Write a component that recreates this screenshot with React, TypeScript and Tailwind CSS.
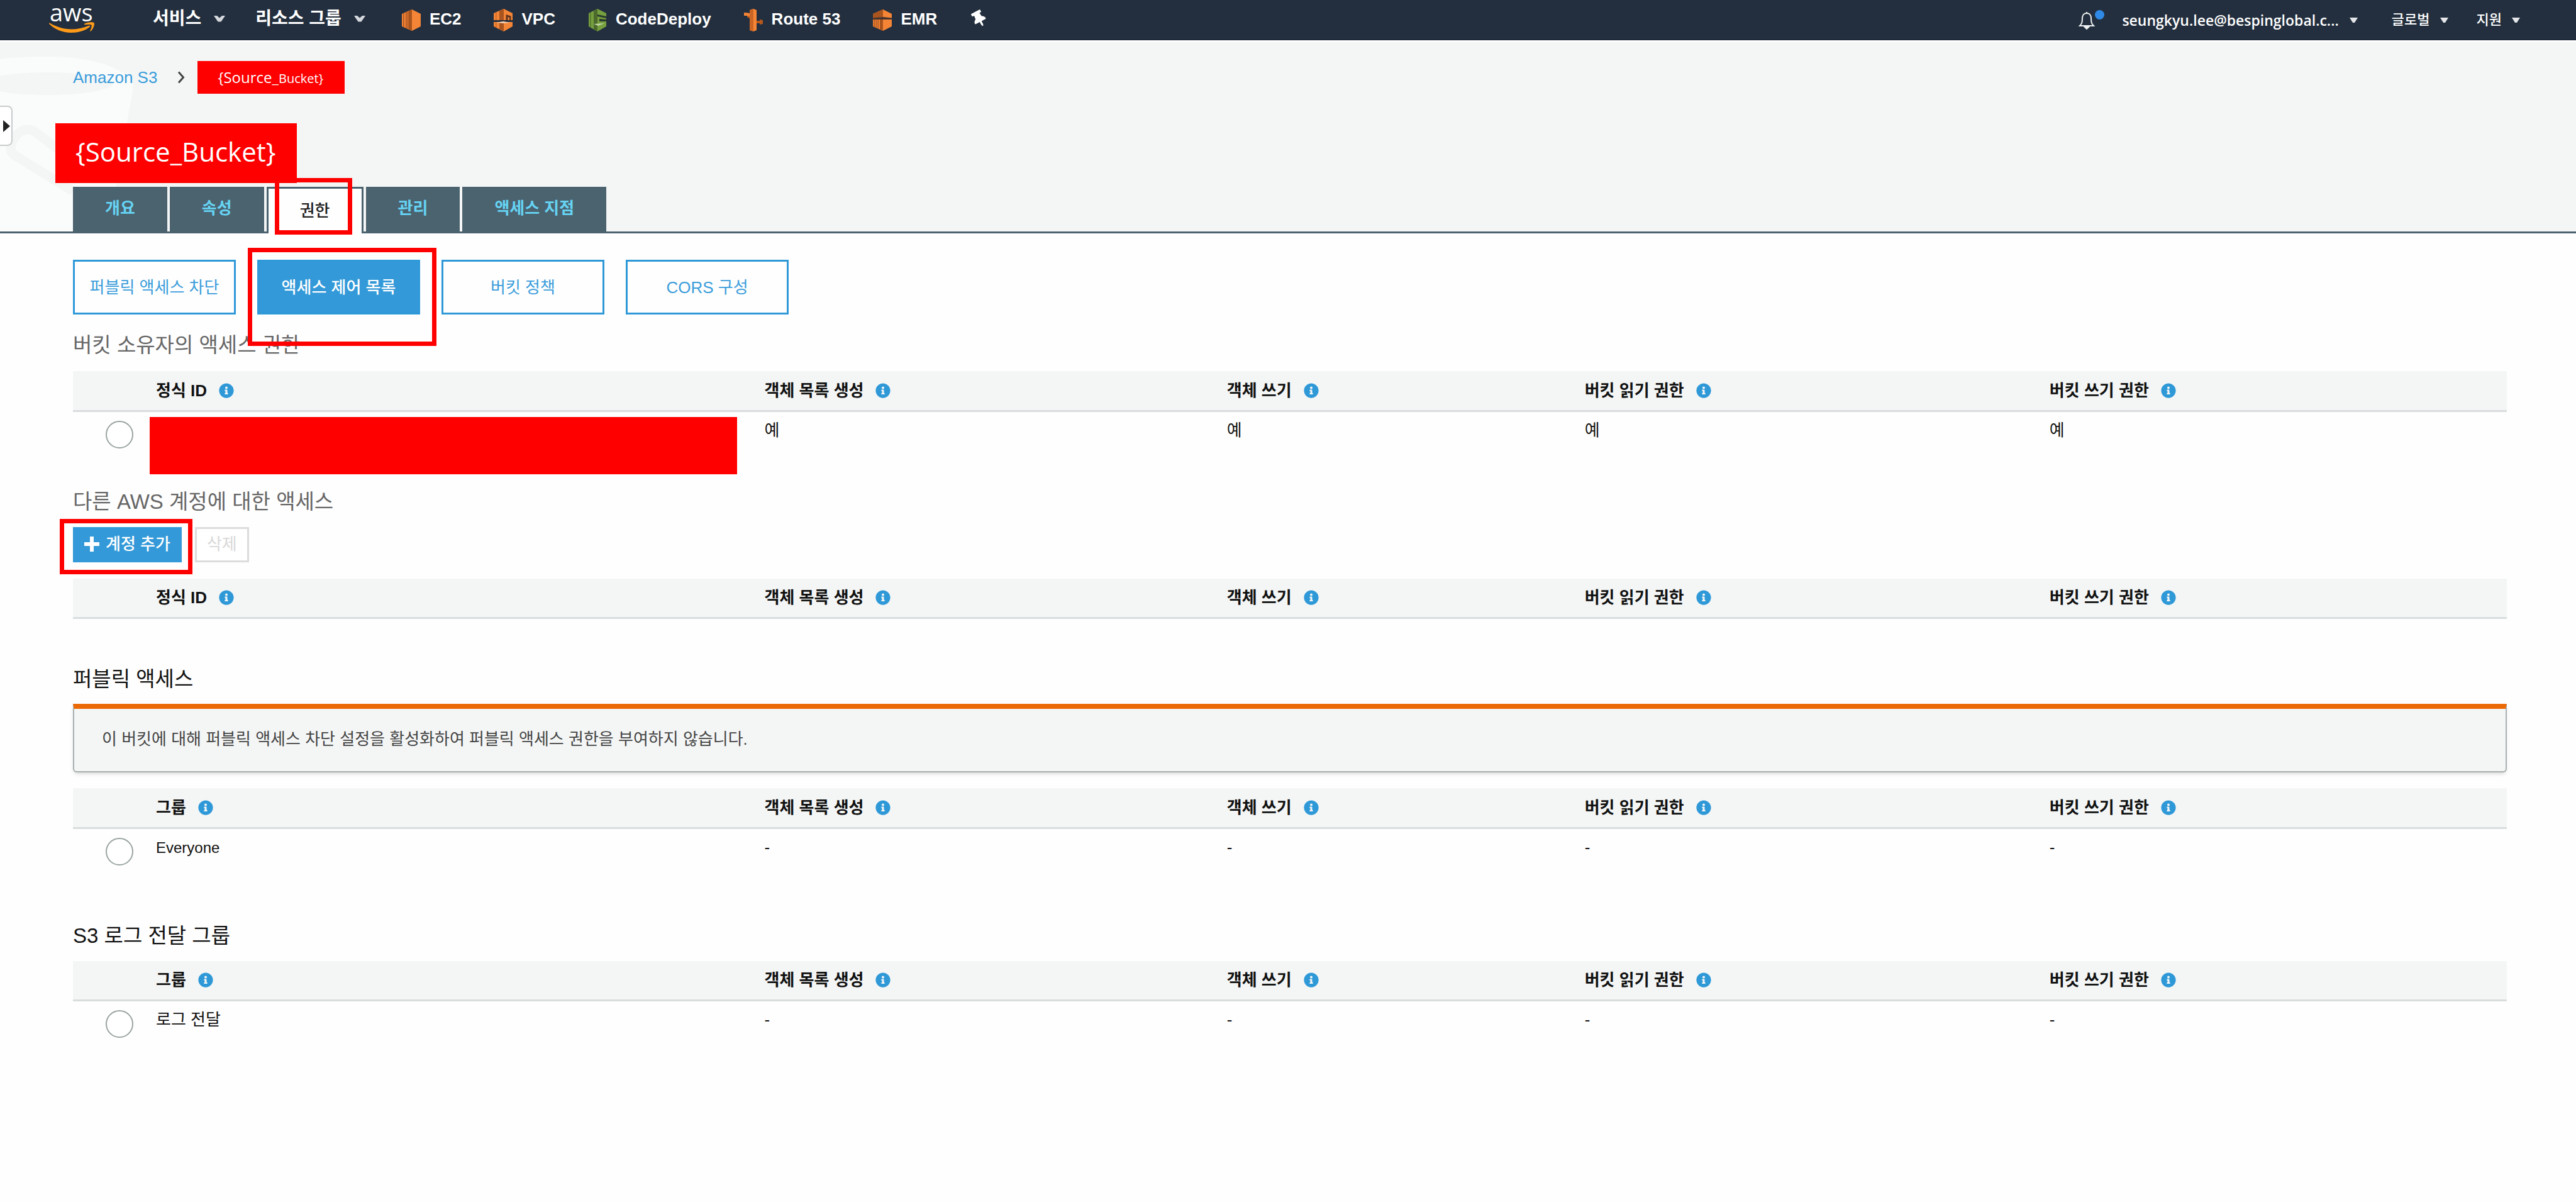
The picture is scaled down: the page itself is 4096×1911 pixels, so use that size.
import React from "react";
import { FaInfoCircle, FaThumbtack } from "react-icons/fa";

const COLUMNS = ["객체 목록 생성", "객체 쓰기", "버킷 읽기 권한", "버킷 쓰기 권한"];

function Chevron() {
  return (
    <svg width="18" height="10" viewBox="0 0 18 10" fill="#d5d9de" aria-hidden="true">
      <path d="M0 0h5l4 3.5L13 0h5l-6.500 9.500h-5z" />
    </svg>
  );
}

function Caret() {
  return (
    <svg width="13" height="8" viewBox="0 0 13 8" fill="#e4e6e9" aria-hidden="true">
      <path d="M0 0h13L8 8H5z" />
    </svg>
  );
}

function ChevronRight() {
  return (
    <svg width="12" height="20" viewBox="0 0 12 20" fill="none" stroke="#444" strokeWidth="3" aria-hidden="true">
      <path d="M2 1.500l7.500 8.500L2 18.500" />
    </svg>
  );
}

function PlusIcon() {
  return (
    <svg width="24" height="24" viewBox="0 0 24 24" fill="#fff" aria-hidden="true">
      <path d="M9 0h6v9h9v6h-9v9H9v-9H0V9h9z" />
    </svg>
  );
}

function AwsLogo() {
  return (
    <a href="#home" aria-label="aws" className="relative block h-16 w-[72px]">
      <span className="block pl-px font-['Open_Sans',sans-serif] text-[38px] leading-[38px] font-medium text-white">aws</span>
      <svg className="absolute top-[35px] left-0" width="73" height="18" viewBox="0 0 73 18" fill="#ff9b18" aria-hidden="true">
        <path d="M1 1.500C11 7.500 23 11.500 36 11.500c9 0 18-2 27-5.500 2-.8 3 .8 1.500 2C57 14 46 17 35.500 17 21 17 9 11.500.5 3.200-.3 2.200.2 1 1 1.500z" />
        <path d="M56 3c4-3 14-3.500 15.500-1.700C73 3.200 70.500 11 66.500 14.500c-.8.700-1.500.3-1.200-.6C66.500 11 68.500 6 67.500 4.700 66.500 3.400 60 4 57 4.300c-1.200.1-1.500-.8-1-1.300z" />
      </svg>
    </a>
  );
}

function Ec2Icon() {
  return (
    <svg width="30" height="34" viewBox="0 0 30 34" aria-hidden="true">
      <path d="M16 0l14 7v20l-14 7L0 27V7z" fill="#f58536" />
      <path d="M16 0v34l-5-2.200V2.200zM7.500 4v26l-1.500-.6V4.600zM3.500 5.500v23L2 28V6z" fill="#a8541f" />
      <path d="M7.500 4L11 2.200v29.600L7.500 30z" fill="#c9682a" />
    </svg>
  );
}

function VpcIcon() {
  return (
    <svg width="30" height="36" viewBox="0 0 30 36" aria-hidden="true">
      <path d="M16 0l14 7v21l-14 8L0 28V7z" fill="#f58536" />
      <path d="M16 0v36l-7-3.500V3.500z" fill="#a8541f" />
      <path d="M3 6v23l1.500.8V5.200z" fill="#c9682a" />
      <path d="M19.500 18V9l8 2.500V18h-2.500v-4l-2.500-1v5z" fill="#5e3421" />
      <path d="M0 18h30v3H0z" fill="#232f3e" />
      <path d="M3 22l12-2 12 2-12 1z" fill="#fbd3b0" />
    </svg>
  );
}

function CodeDeployIcon() {
  return (
    <svg width="30" height="36" viewBox="0 0 30 36" aria-hidden="true">
      <path d="M15 0l14 7v21l-14 8-14-8V7z" fill="#769f3f" />
      <path d="M15 0v36l-6-3.500V3.500z" fill="#4c6a2b" />
      <path d="M3 6v23l1.500.8V5.200z" fill="#55742f" />
      <path d="M15 9l14 3v3l-14-3zM18 16l11 1v3H18z" fill="#2a3a2c" />
      <path d="M9 24l18-1-11 4z" fill="#bfd3a4" />
    </svg>
  );
}

function Route53Icon() {
  return (
    <svg width="30" height="36" viewBox="0 0 30 36" aria-hidden="true">
      <path d="M9 2l6-2 5 2v32l-5 2-6-2z" fill="#f58536" />
      <path d="M9 2l6-2v36l-6-2V15l-4-2v-3l-5 1V6l9 1z" fill="#c96525" />
      <path d="M0 6l9 1v4L0 11z" fill="#f58536" />
      <path d="M20 19h5v-2l5 1v6l-5 1v-2h-5z" fill="#b5581c" />
    </svg>
  );
}

function EmrIcon() {
  return (
    <svg width="30" height="34" viewBox="0 0 30 34" aria-hidden="true">
      <path d="M16 0l14 7v20l-14 7L0 27V7z" fill="#f58536" />
      <path d="M16 0v12L0 14V7z" fill="#a8541f" />
      <path d="M11 15h5v19l-5-2.200zM7.500 15H9v16l-1.500-.6zM4.500 15H6v14.500l-1.500-.6zM1.500 15H3v13.300l-1.500-.6z" fill="#a8541f" />
      <path d="M0 13.500L16 12l14 1.500V16H0z" fill="#43332f" />
    </svg>
  );
}

function BellIcon() {
  return (
    <svg width="28" height="30" viewBox="0 0 28 30" fill="none" stroke="#eef0f2" strokeWidth="2" aria-hidden="true">
      <path d="M14 2v2M14 4c-5 0-7 4-7 8 0 7-1 9-4 12h22c-3-3-4-5-4-12 0-4-2-8-7-8z" />
      <path d="M10 25h8l-4 4z" fill="#eef0f2" />
    </svg>
  );
}

const SERVICES = [
  { name: "EC2", Icon: Ec2Icon },
  { name: "VPC", Icon: VpcIcon },
  { name: "CodeDeploy", Icon: CodeDeployIcon },
  { name: "Route 53", Icon: Route53Icon },
  { name: "EMR", Icon: EmrIcon },
];

function NavBar() {
  return (
    <nav className="flex h-16 items-center justify-between border-b border-[#172130] bg-[#232f3e] pr-[89px] pl-[78px] text-white">
      <div className="flex items-center">
        <AwsLogo />
        <button className="ml-[93px] flex items-center gap-5 pb-1 text-[28px] leading-9 font-bold">
          서비스 <Chevron />
        </button>
        <button className="ml-12 flex items-center gap-5 pb-1 text-[28px] leading-9 font-bold">
          리소스 그룹 <Chevron />
        </button>
        <div className="ml-[58px] flex items-center gap-[52px]">
          {SERVICES.map(({ name, Icon }) => (
            <a key={name} href={"#" + name} className="flex items-center gap-3.5 text-[26px] leading-9 font-bold">
              <Icon />
              <span className="pb-1">{name}</span>
            </a>
          ))}
        </div>
        <button aria-label="고정" className="ml-[54px] pb-1">
          <FaThumbtack className="size-[26px] -rotate-[28deg]" />
        </button>
      </div>
      <div className="flex items-center leading-9">
        <button aria-label="알림" className="relative mr-[42px]">
          <BellIcon />
          <span className="absolute -top-px left-[27px] size-[15px] rounded-full bg-[#2e8ae6]" />
        </button>
        <button className="flex items-center gap-[17px] font-['Open_Sans',sans-serif] text-[23px] font-semibold">
          seungkyu.lee@bespinglobal.c... <Caret />
        </button>
        <button className="ml-[54px] flex items-center gap-4 text-[22px] font-medium">
          글로벌 <Caret />
        </button>
        <button className="ml-[45px] flex items-center gap-4 text-[22px] font-medium">
          지원 <Caret />
        </button>
      </div>
    </nav>
  );
}

function BucketArt() {
  return (
    <svg className="absolute top-0 left-0" width="240" height="301" viewBox="0 67 240 301" aria-hidden="true">
      <path d="M0 94C20 91 50 90 75 90c70 0 128 18 136 44 1 4 0 8 0 10l-10 56-18 100-20 68H0z" fill="#fafbfb" />
      <ellipse cx="75" cy="133" rx="104" ry="18" fill="#f4f6f6" />
      <path d="M116 304L22 246c-14-10 4-42 24-40 12 2 22 14 46 31" fill="none" stroke="#f4f6f6" strokeWidth="15" />
    </svg>
  );
}

function Highlight({ className }: { className: string }) {
  return <span aria-hidden="true" className={"pointer-events-none absolute z-10 border-[7px] border-[#fe0000] " + className} />;
}

function Tabs() {
  const idle = "h-[71px] bg-[#4b626f] px-[51px] pb-1 font-bold text-[#66d3f2]";
  return (
    <div role="tablist" className="mt-1.5 ml-[116px] flex gap-1 text-[26px] leading-9">
      <button role="tab" className={idle}>개요</button>
      <button role="tab" className={idle}>속성</button>
      <div className="relative -mb-[3px]">
        <button role="tab" aria-selected="true" className="h-[74px] border-x-[3px] border-t-[3px] border-[#4b626f] bg-[#fefefe] px-[50px] pb-0.5 font-medium text-[#222]">
          권한
        </button>
        <Highlight className="-top-[14px] -bottom-[2px] left-[13px] right-[18px]" />
      </div>
      <button role="tab" className={idle}>관리</button>
      <button role="tab" className={idle}>액세스 지점</button>
    </div>
  );
}

function PageHeader() {
  return (
    <header className="relative mt-[3px] border-b-[3px] border-[#4b626f] bg-[#f4f6f6] pt-[30px]">
      <BucketArt />
      <button aria-label="패널 열기" className="absolute top-[101px] -left-1 flex h-16 w-6 items-center justify-end rounded-r-lg border-2 border-[#c8cccc] bg-white pr-0.5">
        <svg width="11" height="19" viewBox="0 0 11 19" fill="#222" aria-hidden="true">
          <path d="M0 0l11 9.500L0 19z" />
        </svg>
      </button>
      <div className="relative">
        <div className="flex h-[52px] items-center pl-[116px]">
          <a href="#s3" className="mr-[32px] text-[26px] leading-9 text-[#3b9ddb]">Amazon S3</a>
          <ChevronRight />
          <span className="ml-5 flex h-[52px] items-center bg-[#fe0000] pr-[34px] pl-8 font-['Open_Sans',sans-serif] text-[24px] text-white">
            <span>
              {"{Source_"}
              <span className="text-[20px]">{"Bucket}"}</span>
            </span>
          </span>
        </div>
        <h1 className="mt-[47px] ml-[88px] flex h-[95px] w-fit items-center bg-[#fe0000] pr-[34px] pl-8 pb-1.5 font-['Open_Sans',sans-serif] text-[42px] text-white">
          {"{Source_Bucket}"}
        </h1>
        <Tabs />
      </div>
    </header>
  );
}

type Row = { label: React.ReactNode; name: string; value: string; hidden?: boolean };

function GrantTable({ first, rows, className }: { first: string; rows: Row[]; className: string }) {
  return (
    <table className={"w-full table-fixed border-collapse text-left text-[26px] leading-9 text-[#111] " + className}>
      <colgroup>
        <col className="w-[122px]" />
        <col className="w-[25%]" />
        <col className="w-[19%]" />
        <col className="w-[14.7%]" />
        <col className="w-[19.1%]" />
        <col />
      </colgroup>
      <thead>
        <tr className="h-[63px] border-b-[3px] border-[#d9dddd] bg-[#f4f6f6]">
          <td />
          {[first, ...COLUMNS].map((title) => (
            <th key={title} scope="col" className="p-0 pl-2.5 font-bold">
              <span className="flex items-center gap-[19px]">
                {title}
                <FaInfoCircle className="size-6 text-[#2f99d8]" />
              </span>
            </th>
          ))}
        </tr>
      </thead>
      <tbody>
        {rows.map((row) => (
          <tr key={row.name} className="align-top">
            <td className="pt-3.5 pl-[52px]">
              <input
                type="radio"
                name={row.name}
                aria-label={row.name}
                className="block size-[44px] appearance-none rounded-full border-2 border-[#9aa3a3] bg-white"
              />
            </td>
            {row.hidden ? (
              <td className="pt-2 pr-[34px] pb-5">
                <div className="h-[91px] bg-[#fe0000]" />
              </td>
            ) : (
              <td className="pt-[11px] pl-2.5">{row.label}</td>
            )}
            {COLUMNS.map((column) => (
              <td key={column} className="pt-[11px] pl-2.5">{row.value}</td>
            ))}
          </tr>
        ))}
      </tbody>
    </table>
  );
}

function SectionButtons() {
  const box = "h-[87px] w-[259px] border-[3px] border-[#2f99d8]";
  return (
    <div className="flex gap-[34px] text-[26px] leading-9 text-[#3b9ddb]">
      <button className={box}>퍼블릭 액세스 차단</button>
      <div className="relative">
        <button className={box + " bg-[#3399d8] font-medium text-white"}>액세스 제어 목록</button>
        <Highlight className="-top-[19px] -bottom-[50px] -left-[15px] -right-[26px]" />
      </div>
      <button className={box}>버킷 정책</button>
      <button className={box}>CORS 구성</button>
    </div>
  );
}

export default function App() {
  return (
    <div className="min-h-screen bg-[#fefefe] font-['Liberation_Sans','Noto_Sans_CJK_KR',sans-serif]">
      <NavBar />
      <PageHeader />
      <main className="pt-[42px] pr-[110px] pl-[116px]">
        <SectionButtons />
        <h2 className="mt-[25px] text-[33px] leading-[48px] text-[#666]">버킷 소유자의 액세스 권한</h2>
        <GrantTable first="정식 ID" className="mt-[17px]" rows={[{ label: "", name: "소유자", value: "예", hidden: true }]} />

        <h2 className="text-[33px] leading-[48px] text-[#666]">다른 AWS 계정에 대한 액세스</h2>
        <div className="mt-4 flex gap-[21px] text-[26px] leading-9">
          <div className="relative">
            <button className="flex h-14 items-center gap-2.5 bg-[#3399d8] px-[18px] pb-0.5 font-medium text-white">
              <PlusIcon />
              계정 추가
            </button>
            <Highlight className="-top-[13px] -bottom-[19px] -left-[21px] -right-[17px]" />
          </div>
          <button disabled className="h-14 border-[3px] border-[#dcdcdc] bg-white px-4 pb-0.5 text-[#d8d8d8]">삭제</button>
        </div>
        <GrantTable first="정식 ID" className="mt-[26px]" rows={[]} />

        <h2 className="mt-[72px] text-[33px] leading-[48px] text-[#111]">퍼블릭 액세스</h2>
        <p className="mt-[15px] flex h-[109px] items-center rounded-b-md border-2 border-t-8 border-[#a9b0b0] border-t-[#eb6a05] bg-[#f4f6f6] px-11 pb-1 text-[26px] leading-9 text-[#444] shadow-md">
          이 버킷에 대해 퍼블릭 액세스 차단 설정을 활성화하여 퍼블릭 액세스 권한을 부여하지 않습니다.
        </p>
        <GrantTable
          first="그룹"
          className="mt-[25px]"
          rows={[{ label: <span className="text-[24px]">Everyone</span>, name: "Everyone", value: "-" }]}
        />

        <h2 className="mt-[88px] text-[33px] leading-[48px] text-[#111]">S3 로그 전달 그룹</h2>
        <GrantTable first="그룹" className="mt-4" rows={[{ label: "로그 전달", name: "로그 전달", value: "-" }]} />
      </main>
    </div>
  );
}
